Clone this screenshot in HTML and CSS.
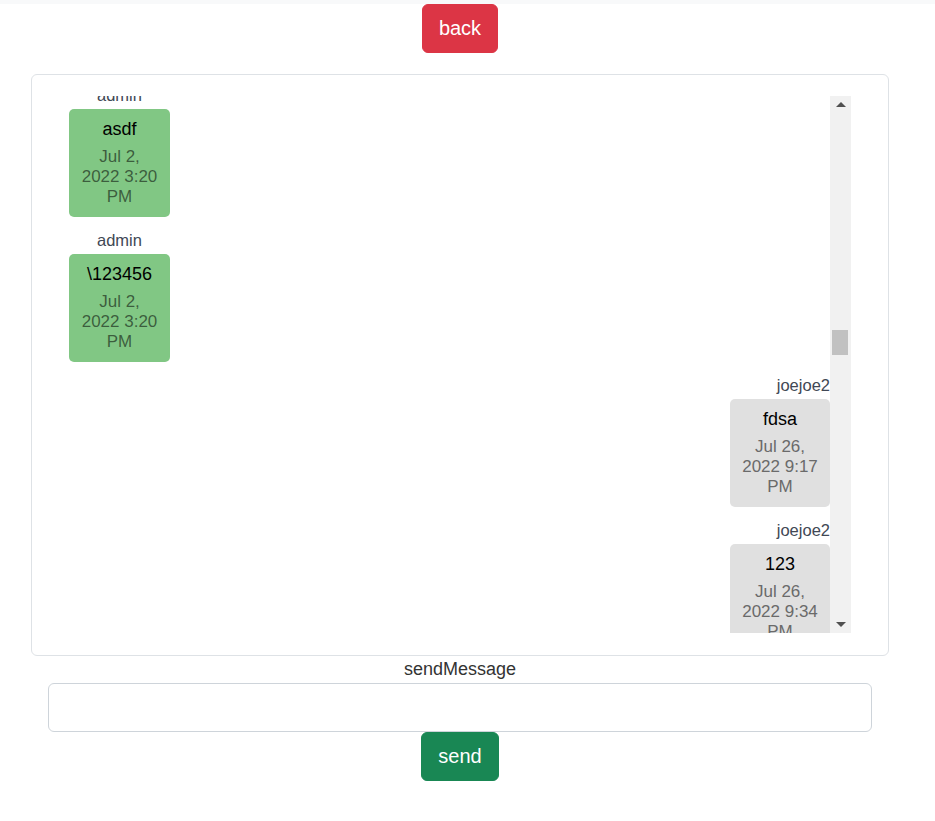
FILE: index.html
```html
<!DOCTYPE html>
<html>
<head>
<meta charset="utf-8">
<link rel="stylesheet" href="styles.css">
</head>
<body>
<div class="topbar"></div>
<div class="page">
  <div class="back-row"><button class="btn btn-back">back</button></div>
  <div class="card">
    <div class="scroller">
      <div class="messages">
        <div class="msg left">
          <div class="name">admin</div>
          <div class="bubble green"><div class="text">asdf</div><div class="date">Jul 2, 2022 3:20 PM</div></div>
        </div>
        <div class="msg left">
          <div class="name">admin</div>
          <div class="bubble green"><div class="text">\123456</div><div class="date">Jul 2, 2022 3:20 PM</div></div>
        </div>
        <div class="msg right">
          <div class="name">joejoe2</div>
          <div class="bubble gray"><div class="text">fdsa</div><div class="date">Jul 26, 2022 9:17 PM</div></div>
        </div>
        <div class="msg right">
          <div class="name">joejoe2</div>
          <div class="bubble gray"><div class="text">123</div><div class="date">Jul 26, 2022 9:34 PM</div></div>
        </div>
      </div>
      <div class="scrollbar">
        <div class="sb-btn"><span class="arrow-up"></span></div>
        <div class="sb-track"><div class="sb-thumb"></div></div>
        <div class="sb-btn"><span class="arrow-down"></span></div>
      </div>
    </div>
  </div>
  <div class="send-area">
    <label class="send-label" for="msg">sendMessage</label>
    <input id="msg" class="send-input" type="text">
    <button class="btn btn-send">send</button>
  </div>
</div>
</body>
</html>
```

FILE: styles.css
```css
* { box-sizing: border-box; }
body {
  margin: 0;
  font-family: "Liberation Sans", Arial, sans-serif;
  font-size: 16px;
  line-height: 1.5;
  color: #212529;
  background: #fff;
}
.topbar { height: 4px; background: #f8f9fa; }
.page { margin-left: 31px; width: 858px; }
.back-row { text-align: center; }
.btn {
  display: inline-block;
  font-family: "Liberation Sans", Arial, sans-serif;
  font-size: 20px;
  line-height: 31px;
  padding: 8px 16px;
  border: 1px solid transparent;
  border-radius: 6px;
  color: #fff;
  cursor: pointer;
}
.btn-back { background: #dc3545; border-color: #dc3545; }
.btn-send { background: #198754; border-color: #198754; margin-top: 0; }
.card {
  margin-top: 21px;
  border: 1px solid #dee2e6;
  border-radius: 6px;
  padding: 21px 37px 22px 37px;
}
.scroller { display: flex; height: 537px; }
.messages {
  flex: 1;
  overflow: hidden;
  display: flex;
  flex-direction: column;
}
.msg { display: flex; flex-direction: column; margin-bottom: 13px; flex-shrink: 0; }
.msg:first-child { margin-top: -11px; }
.msg.left { align-self: flex-start; width: 101px; align-items: center; }
.msg.right { align-self: flex-end; width: 100px; align-items: flex-end; }
.name { font-size: 16.5px; line-height: 20px; color: #414855; margin-bottom: 4px; white-space: nowrap; }
.bubble {
  width: 100%;
  text-align: center;
  border-radius: 5px;
  padding: 8px 11px 10px;
}
.bubble.green { background: #81c784; }
.bubble.gray { background: #e0e0e0; }
.text { font-size: 18px; line-height: 24px; color: #000; }
.date { font-size: 17px; margin-top: 6px; line-height: 20px; color: rgba(0,0,0,0.55); }
.bubble.gray .date { color: #6a6a6a; }
.scrollbar {
  width: 21px;
  background: #f1f1f1;
  display: flex;
  flex-direction: column;
}
.sb-btn { height: 17px; display: flex; align-items: center; justify-content: center; }
.arrow-up {
  width: 0; height: 0;
  border-left: 5px solid transparent;
  border-right: 5px solid transparent;
  border-bottom: 5px solid #505050;
}
.arrow-down {
  width: 0; height: 0;
  border-left: 5px solid transparent;
  border-right: 5px solid transparent;
  border-top: 5px solid #505050;
}
.sb-track { flex: 1; padding-left: 2px; }
.sb-thumb { width: 16px; height: 25px; margin-top: 217px; background: #c1c1c1; }
.send-area { text-align: center; }
.send-label { display: block; font-size: 18px; line-height: 24px; margin-top: 1px; color: #333; }
.send-input {
  display: block;
  width: 824px;
  height: 49px;
  margin: 2px 17px 0;
  border: 1px solid #ced4da;
  border-radius: 6px;
  font-size: 16px;
  padding: 6px 12px;
}
```
